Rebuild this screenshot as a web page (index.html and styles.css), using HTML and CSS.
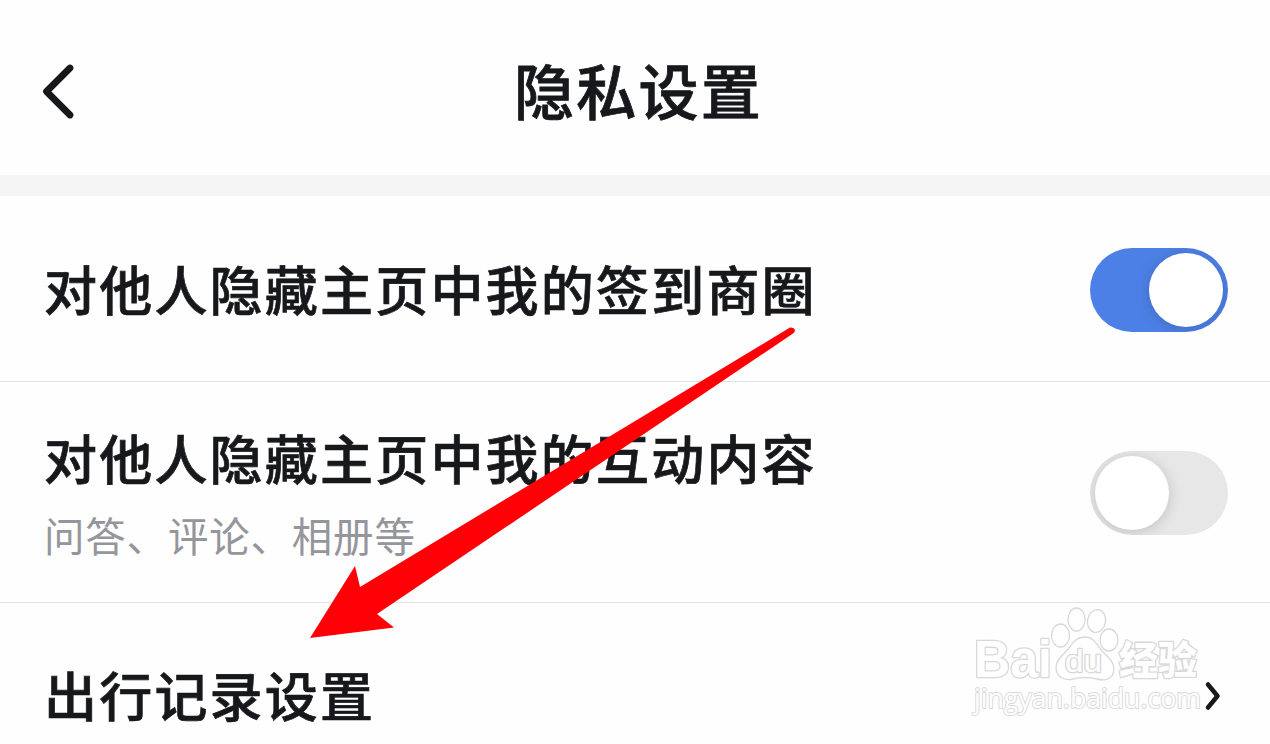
FILE: index.html
```
<!DOCTYPE html>
<html lang="zh-CN">
<head>
    <meta charset="UTF-8">
    <meta name="viewport" content="width=device-width, initial-scale=1.0">
    <title>隐私设置</title>
    <link rel="stylesheet" href="styles.css">
</head>
<body>
    <div class="page">
        <header class="header">
            <a class="back" href="#" aria-label="返回">
                <svg width="40" height="64" viewBox="0 0 40 64">
                    <path d="M31 9 L7.5 32.5 L31 56" />
                </svg>
            </a>
            <h1>隐私设置</h1>
        </header>

        <main class="list">
            <div class="row row-checkin">
                <div class="label">对他人隐藏主页中我的签到商圈</div>
                <div class="switch on"><span class="knob"></span></div>
            </div>
            <div class="row row-content">
                <div class="text">
                    <div class="label">对他人隐藏主页中我的互动内容</div>
                    <div class="desc">问答、评论、相册等</div>
                </div>
                <div class="switch"><span class="knob"></span></div>
            </div>
            <div class="row row-travel">
                <div class="label">出行记录设置</div>
                <svg class="chevron" width="20" height="34" viewBox="0 0 20 34">
                    <path d="M5 4.5 L14.5 16 L5 27.5" />
                </svg>
            </div>
        </main>

        <!-- watermark -->
        <svg class="watermark" width="250" height="130" viewBox="965 600 250 130">
            <text class="wm-bai" x="974" y="677" textLength="78" lengthAdjust="spacingAndGlyphs">Bai</text>
            <ellipse cx="1060.5" cy="635.5" rx="9" ry="11.5" />
            <ellipse cx="1076.5" cy="619.5" rx="8.5" ry="11.5" />
            <ellipse cx="1096.5" cy="621" rx="9" ry="11.5" transform="rotate(10 1096.5 621)" />
            <ellipse cx="1109" cy="640" rx="9" ry="11" />
            <path d="M1085 637 C1094 637 1097 645 1102 651 C1107 656 1114 661 1114 669 C1113 680 1105 681 1097 679 C1089 677 1081 677 1073 679 C1064 681 1056 677 1056 667 C1056 659 1064 655 1069 648 C1073 642 1077 637 1085 637 Z" />
            <text class="wm-du" x="1065" y="672" textLength="37" lengthAdjust="spacingAndGlyphs">du</text>
            <text class="wm-cn" x="1119" y="674" textLength="78" lengthAdjust="spacingAndGlyphs">经验</text>
            <text class="wm-url" x="974" y="708" textLength="227" lengthAdjust="spacingAndGlyphs">jingyan.baidu.com</text>
        </svg>

        <!-- red pointer to the last row -->
        <svg class="arrow" width="500" height="330" viewBox="305 320 500 330">
            <path d="M310 638 L355 566 L360 587 L790 327.5 Q794 327 795 330 Q795 332 793 333.5 L377 614 L394 627.5 Z" />
        </svg>
    </div>
</body>
</html>
```
FILE: styles.css
```
* {
    box-sizing: border-box;
}
body {
    margin: 0;
    background-color: #fefefe;
    color: #17181b;
    font-family: "Noto Sans CJK SC", sans-serif;
}
.page {
    position: relative;
    height: 744px;
    overflow: hidden;
}

.header {
    display: grid;
    grid-template-columns: 120px 1fr 120px;
    align-items: center;
    height: 196px;
    padding: 0 3px 0 0;
    border-bottom: 21px solid #f5f5f5;
}
.back {
    padding: 6px 0 0 39px;
}
.back svg {
    display: block;
}
.back path,
.chevron path {
    fill: none;
    stroke: #17181b;
    stroke-width: 6.8;
    stroke-linecap: round;
    stroke-linejoin: round;
}
h1 {
    margin: 3px 0 0 10px;
    font-size: 60px;
    line-height: 80px;
    font-weight: 500;
    letter-spacing: 2.2px;
    text-align: center;
    -webkit-text-stroke: 0.8px #17181b;
}

.row {
    display: flex;
    justify-content: space-between;
    align-items: center;
    padding: 2px 42px 0 44px;
    border-bottom: 1px solid #e2e2e2;
}
.row-checkin {
    height: 186px;
}
.row-content {
    height: 221px;
}
.row-travel {
    height: 185px;
    border-bottom: 0;
    padding-right: 47px;
}
.label {
    margin-top: -4px;
    font-size: 53px;
    line-height: 72px;
    font-weight: 500;
    letter-spacing: 2.2px;
    white-space: nowrap;
    -webkit-text-stroke: 0.7px #17181b;
}
.row-content .label {
    margin-top: -1px;
}
.row-travel .label {
    margin-top: -6px;
}
.desc {
    margin-top: 12px;
    color: #95969b;
    font-size: 40.5px;
    line-height: 60px;
    font-weight: 400;
    letter-spacing: 0.8px;
}

.switch {
    flex: none;
    width: 138px;
    height: 84px;
    padding: 5px;
    border-radius: 42px;
    background-color: #e7e7e7;
    overflow: hidden;
}
.knob {
    display: block;
    width: 74px;
    height: 74px;
    border-radius: 50%;
    background-color: #fff;
    box-shadow: 0 2px 14px rgba(0, 0, 0, 0.17);
}
.switch.on {
    background-color: #4d80e6;
}
.switch.on .knob {
    margin-left: 54px;
}
.chevron path {
    stroke-width: 4.5;
}

.watermark {
    position: absolute;
    left: 965px;
    top: 600px;
    fill: #fff;
    stroke: #d8d8d8;
    stroke-width: 1.3;
}
.watermark text {
    font-family: "Liberation Sans", "Noto Sans CJK SC", sans-serif;
    paint-order: stroke;
    stroke-width: 2.6;
    stroke-linejoin: round;
}
.watermark .wm-bai {
    font-size: 51px;
    font-weight: bold;
}
.watermark .wm-du {
    font-size: 31px;
}
.watermark .wm-cn {
    font-family: "Noto Sans CJK SC", sans-serif;
    font-size: 39px;
    font-weight: 900;
}
.watermark .wm-url {
    font-family: "Open Sans", sans-serif;
    font-size: 27px;
    stroke: #dadada;
    stroke-width: 2;
}

.arrow {
    position: absolute;
    left: 305px;
    top: 320px;
    fill: #ff0006;
}
```
